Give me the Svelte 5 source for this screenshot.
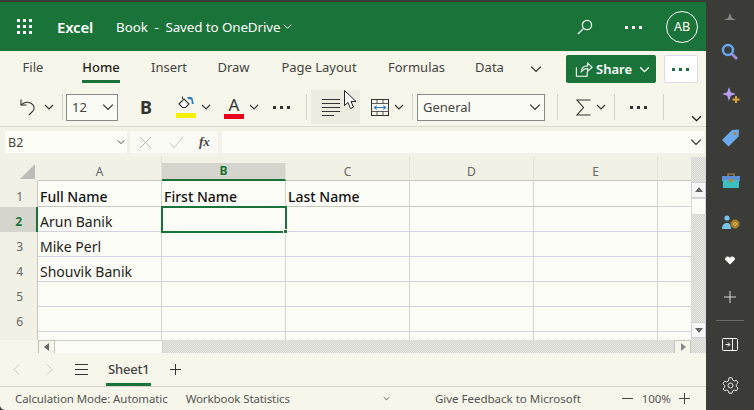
<script>
  const tabs = [
    { label: 'File', width: 66 },
    { label: 'Home', width: 70, active: true },
    { label: 'Insert', width: 66 },
    { label: 'Draw', width: 63 },
    { label: 'Page Layout', width: 108 },
    { label: 'Formulas', width: 87 },
    { label: 'Data', width: 59 },
  ];
  const columns = ['A', 'B', 'C', 'D', 'E'];
  const rows = [
    { n: 1, h: 26, cells: ['Full Name', 'First Name', 'Last Name', '', ''], bold: true },
    { n: 2, h: 25, cells: ['Arun Banik', '', '', '', ''] },
    { n: 3, h: 25, cells: ['Mike Perl', '', '', '', ''] },
    { n: 4, h: 25, cells: ['Shouvik Banik', '', '', '', ''] },
    { n: 5, h: 25, cells: ['', '', '', '', ''] },
    { n: 6, h: 25, cells: ['', '', '', '', ''] },
  ];
</script>

{#snippet chev(size = 10, color = '#333')}
  <svg class="chev" width={size} height={size} viewBox="0 0 10 10"><path d="M1 3l4 4 4-4" fill="none" stroke={color} stroke-width="1.1" /></svg>
{/snippet}

{#snippet dots(color = '#333')}
  <svg width="18" height="4" viewBox="0 0 18 4"><g fill={color}><rect x="0" y="1" width="3" height="3" /><rect x="7" y="1" width="3" height="3" /><rect x="14" y="1" width="3" height="3" /></g></svg>
{/snippet}

<div class="window">
  <main class="excel">
    <header class="titlebar">
      <svg class="waffle" width="16" height="16" viewBox="0 0 16 16" fill="#fff">
        <rect x="0" y="0" width="3" height="3" /><rect x="6" y="0" width="3" height="3" /><rect x="12" y="0" width="3" height="3" />
        <rect x="0" y="6" width="3" height="3" /><rect x="6" y="6" width="3" height="3" /><rect x="12" y="6" width="3" height="3" />
        <rect x="0" y="12" width="3" height="3" /><rect x="6" y="12" width="3" height="3" /><rect x="12" y="12" width="3" height="3" />
      </svg>
      <strong class="app-name">Excel</strong>
      <span class="doc">Book&nbsp; - &nbsp;Saved to OneDrive</span>
      {@render chev(9, '#fff')}
      <span class="grow"></span>
      <svg class="search" width="16" height="16" viewBox="0 0 16 16" fill="none" stroke="#fff" stroke-width="1.2"><circle cx="10" cy="6" r="4.6" /><path d="M6.6 9.4L1 15" /></svg>
      <span class="more">{@render dots('#fff')}</span>
      <span class="avatar">AB</span>
    </header>

    <section class="ribbon">
      <div class="tabs">
        {#each tabs as tab}
          <span class="tab" class:active={tab.active} style="width:{tab.width}px">
            <span class="tab-label">{tab.label}</span>
          </span>
        {/each}
        <span class="tab-more">{@render chev(12)}</span>
        <span class="grow"></span>
        <button class="share">
          <svg width="18" height="18" viewBox="0 0 20 20" fill="none" stroke="#fff" stroke-width="1.2"><path d="M1.500 8v10h12v-5" /><path d="M7 13c0-4 2.500-6.500 7-6.500V3.500l5 4.500-5 4.500V9.500c-3 0-5 1-7 3.500z" /></svg>
          <span>Share</span>
          {@render chev(11, '#fff')}
        </button>
        <button class="overflow">{@render dots('#1f6e43')}</button>
      </div>

      <div class="toolbar">
        <svg class="undo" width="18" height="18" viewBox="0 0 18 18" fill="none" stroke="#333" stroke-width="1.1"><path d="M1 1.500V7h5.500" /><path d="M1 7c2.500-2.500 6-3.500 9.500-2 4 2 4.500 5.500 2.500 8l-4 4" /></svg>
        <span class="undo-chev">{@render chev(10)}</span>
        <i class="sep"></i>
        <span class="combo size"><span>12</span>{@render chev(12)}</span>
        <b class="bold">B</b>
        <span class="swatch fill">
          <svg width="18" height="15" viewBox="0 0 18 15"><path d="M2 9l5-5 5 5-3.500 3.500h-3z" fill="#fff" stroke="#333" stroke-width="1.100" /><path d="M5.500 4V1.500" stroke="#333" stroke-width="1.100" /><path d="M10 2.500c3-1.500 6-.500 6 2.500l.8 4h-2l-.3-3.500c-.2-1.500-2-1.500-3-1z" fill="#2d7cc0" /></svg>
          <i class="bar yellow"></i>
        </span>
        <span class="fill-chev">{@render chev(10)}</span>
        <span class="swatch color">
          <span class="letter">A</span>
          <i class="bar red"></i>
        </span>
        <span class="color-chev">{@render chev(10)}</span>
        <span class="dots-a">{@render dots()}</span>
        <i class="sep sep-a"></i>
        <span class="align">
          <svg width="19" height="18" viewBox="0 0 19 18" stroke="#333" stroke-width="1"><path d="M0 1.500h18M0 5.500h18M0 9.500h18M0 13.500h18M0 17.500h12" fill="none" /></svg>
        </span>
        <svg class="wrap" width="18" height="17" viewBox="0 0 18 17" fill="none" stroke="#333"><rect x=".5" y=".5" width="17" height="16" /><path d="M.5 4.500h17M.5 12.500h17M6 .5v4M12 .5v4M6 12.500v4M12 12.500v4" stroke-width=".8" /><path d="M3 8.500h12M6 6.500l-3 2 3 2M12 6.500l3 2-3 2" stroke="#2d7cc0" /></svg>
        <span class="wrap-chev">{@render chev(10)}</span>
        <i class="sep sep-b"></i>
        <span class="combo format"><span>General</span>{@render chev(12)}</span>
        <i class="sep sep-c"></i>
        <svg class="sigma" width="15" height="17" viewBox="0 0 15 17" fill="none" stroke="#333" stroke-width="1.100"><path d="M14.500 1H1l6.500 7.500L1 16h13.500" /></svg>
        <span class="sum-chev">{@render chev(10)}</span>
        <i class="sep sep-d"></i>
        <span class="dots-b">{@render dots()}</span>
        <i class="sep sep-e"></i>
        <span class="collapse">{@render chev(11, '#111')}</span>
        <svg class="pointer" width="13" height="20" viewBox="0 0 13 20"><path d="M.5.500v15l3.500-3 2.500 6 3-1.300-2.500-5.700h5z" fill="#fff" stroke="#222" /></svg>
      </div>
    </section>

    <div class="formula">
      <span class="name-box"><span>B2</span>{@render chev(8, '#333')}</span>
      <span class="fx-box">
        <svg width="13" height="13" viewBox="0 0 13 13" stroke="#b5b5b5" fill="none"><path d="M1 1l11 11M12 1L1 12" /></svg>
        <svg width="15" height="13" viewBox="0 0 15 13" stroke="#c8c8c0" fill="none"><path d="M1 7l4 5 9-11" /></svg>
        <em>fx</em>
      </span>
      <span class="input">{@render chev(12)}</span>
    </div>

    <div class="sheet">
      <div class="cells">
        <div class="head-row">
          <span class="corner"><i></i></span>
          {#each columns as c}
            <span class="col-head" class:picked={c === 'B'}>{c}</span>
          {/each}
          <span class="col-head edge"></span>
        </div>
        {#each rows as row}
          <div class="row" style="height:{row.h}px">
            <span class="row-head" class:picked={row.n === 2} class:top={row.bold}>{row.n}</span>
            {#each row.cells as cell, i}
              <span class="cell" class:bold-cell={row.bold} class:current={row.n === 2 && i === 1}>
                {cell}
                {#if row.n === 2 && i === 1}<i class="handle"></i>{/if}
              </span>
            {/each}
            <span class="cell edge"></span>
          </div>
        {/each}
        <div class="row tail">
          <span class="row-head"></span>
          {#each columns as c}<span class="cell"></span>{/each}
          <span class="cell edge"></span>
        </div>
        <div class="hscroll">
          <span class="spacer"></span>
          <span class="sbtn"><svg width="6" height="8" viewBox="0 0 6 8"><path d="M5 0v8L0 4z" fill="#666" /></svg></span>
          <span class="hthumb"></span>
          <span class="grow"></span>
          <span class="sbtn end"><svg width="6" height="8" viewBox="0 0 6 8"><path d="M1 0v8l5-4z" fill="#888" /></svg></span>
        </div>
      </div>
      <div class="vscroll">
        <span class="vbtn"><svg width="8" height="6" viewBox="0 0 8 6"><path d="M0 5h8L4 0z" fill="#666" /></svg></span>
        <span class="vthumb"></span>
        <span class="grow"></span>
        <span class="vbtn"><svg width="8" height="6" viewBox="0 0 8 6"><path d="M0 1h8L4 6z" fill="#666" /></svg></span>
      </div>
    </div>

    <div class="sheetbar">
      <svg class="prev" width="7" height="11" viewBox="0 0 7 11" fill="none" stroke="#c9c9c2"><path d="M6 .5l-5 5 5 5" /></svg>
      <svg class="next" width="7" height="11" viewBox="0 0 7 11" fill="none" stroke="#c9c9c2"><path d="M1 .5l5 5-5 5" /></svg>
      <svg class="burger" width="13" height="11" viewBox="0 0 13 11" stroke="#333"><path d="M0 .5h13M0 5.500h13M0 10.500h13" /></svg>
      <span class="sheet-tab">Sheet1</span>
      <svg class="add" width="11" height="11" viewBox="0 0 11 11" stroke="#333"><path d="M5.500 0v11M0 5.500h11" /></svg>
    </div>

    <footer class="status">
      <span class="calc">Calculation Mode: Automatic</span>
      <span class="stats">Workbook Statistics</span>
      <span class="small-chev">{@render chev(7, '#444')}</span>
      <span class="feedback">Give Feedback to Microsoft</span>
      <svg class="minus" width="11" height="11" viewBox="0 0 11 11" stroke="#444"><path d="M0 5.500h11" /></svg>
      <span class="zoom">100%</span>
      <svg width="11" height="11" viewBox="0 0 11 11" stroke="#444"><path d="M5.500 0v11M0 5.500h11" /></svg>
    </footer>
  </main>

  <aside class="sidebar">
    <svg class="s0" width="12" height="7" viewBox="0 0 12 7"><path d="M0 7l4-2 2-5 2 5 4 2z" fill="#85858a" /></svg>
    <svg class="s1" width="18" height="18" viewBox="0 0 18 18" fill="none"><circle cx="7" cy="7" r="5" stroke="#6aa9f2" stroke-width="2.400" /><path d="M11 11l5 5" stroke="#a98ae0" stroke-width="2.600" /></svg>
    <svg class="s2" width="18" height="17" viewBox="0 0 18 17"><path d="M7 0l1.800 5.200L14 7l-5.200 1.800L7 14l-1.800-5.200L0 7l5.200-1.800z" fill="#b99af5" /><path d="M14 9v7M10.500 12.500h7" stroke="#d9a63c" stroke-width="2" /></svg>
    <svg class="s3" width="18" height="18" viewBox="0 0 18 18"><path d="M0 11L10 1l7-.5-.5 7-10 10z" fill="#6aa9ee" /><circle cx="13" cy="4.500" r="1.600" fill="#b5822b" /></svg>
    <svg class="s4" width="18" height="15" viewBox="0 0 18 15"><path d="M6 3V1h6v2" fill="none" stroke="#b08a4a" stroke-width="1.200" /><rect x="0" y="3" width="18" height="5" fill="#5b8fd6" /><rect x="1" y="7" width="16" height="8" fill="#3cbfc0" /><rect x="7" y="6" width="4" height="3" fill="#b5874a" /></svg>
    <svg class="s5" width="18" height="15" viewBox="0 0 18 15"><circle cx="5" cy="3" r="2.600" fill="#76c3ea" /><path d="M0 14c0-4 2-6 5-6s4 2 4 6z" fill="#76c3ea" /><circle cx="13" cy="9" r="4.500" fill="#a9812e" stroke="#6e5a2a" /><circle cx="13" cy="9" r="1.500" fill="none" stroke="#e0b95a" /></svg>
    <svg class="s6" width="10" height="9" viewBox="0 0 10 9"><path d="M5 8.500L0 3.500C0 .5 3.500-.5 5 2c1.500-2.500 5-1.500 5 1.500z" fill="#fff" /></svg>
    <svg class="s7" width="12" height="12" viewBox="0 0 12 12" stroke="#d8d8d8"><path d="M6 0v12M0 6h12" /></svg>
    <i class="side-sep"></i>
    <svg class="s8" width="16" height="13" viewBox="0 0 16 13" fill="none" stroke="#fff"><rect x=".5" y=".5" width="15" height="12" rx="1" /><path d="M10.500.5v12" /><path d="M3.500 6.500h4M6 4.500l2 2-2 2" /></svg>
    <svg class="s9" width="17" height="17" viewBox="0 0 17 17" fill="none" stroke="#e8e8e8"><circle cx="8.500" cy="8.500" r="2.500" /><path d="M7 .8h3l.6 2.300 1.600.9 2.300-.7 1.500 2.600-1.700 1.700v1.800l1.700 1.700-1.500 2.600-2.300-.7-1.600.9-.6 2.300H7l-.6-2.300-1.600-.9-2.300.7L1 12l1.700-1.700V8.500L1 6.800l1.500-2.600 2.300.7 1.600-.9z" /></svg>
  </aside>
</div>

<style>
  :global(body) {
    margin: 0;
    background: #3b3b38;
  }

  .window {
    display: flex;
    width: 754px;
    height: 410px;
    overflow: hidden;
    font-family: "Noto Sans", "Open Sans", sans-serif;
    color: #333;
    background: #3b3b38;
  }

  .excel {
    display: flex;
    flex-direction: column;
    width: 706px;
    height: 408px;
    margin-top: 2px;
    background: #f6f6ea;
    border-bottom-left-radius: 5px;
  }

  .grow {
    flex: 1;
  }

  svg {
    flex: none;
    display: block;
  }

  .titlebar {
    display: flex;
    align-items: center;
    flex: none;
    height: 49px;
    background: #1a7338;
    color: #fff;
  }

  .waffle {
    margin-left: 17px;
  }

  .app-name {
    margin-left: 24px;
    font-size: 15px;
    font-weight: 600;
    letter-spacing: -0.2px;
  }

  .doc {
    margin-left: 23px;
    font-size: 13.400px;
    letter-spacing: -0.1px;
  }

  .titlebar .chev {
    margin-left: 3px;
  }

  .search {
    margin-right: 32px;
  }

  .more {
    margin-right: 23px;
  }

  .avatar {
    display: flex;
    align-items: center;
    justify-content: center;
    box-sizing: border-box;
    width: 32px;
    height: 32px;
    margin-right: 8px;
    border: 1px solid #fff;
    border-radius: 50%;
    font-size: 12.500px;
  }

  .ribbon {
    flex: none;
    height: 76px;
    border-bottom: 1px solid #d9d9d0;
    box-sizing: border-box;
  }

  .tabs {
    display: flex;
    align-items: stretch;
    height: 37px;
    box-sizing: border-box;
    padding: 4px 8px 0 0;
  }

  .tab {
    display: flex;
    justify-content: center;
    flex: none;
    font-size: 13px;
    line-height: 25px;
    color: #444;
  }

  .tab-label {
    display: block;
    height: 25px;
    border-bottom: 3px solid transparent;
  }

  .tab.active {
    color: #222;
    font-weight: 500;
  }

  .tab.active .tab-label {
    border-color: #1a7338;
  }

  .tab-more {
    display: flex;
    align-items: center;
    height: 28px;
    margin-left: 11px;
  }

  .share {
    display: flex;
    align-items: center;
    box-sizing: border-box;
    width: 90px;
    height: 28px;
    padding: 0 0 0 9px;
    border: 0;
    border-radius: 2px;
    background: #1a7338;
    color: #fff;
    font: 600 13px "Noto Sans", sans-serif;
  }

  .share span {
    margin: 0 7px 0 3px;
  }

  .overflow {
    display: flex;
    align-items: center;
    justify-content: center;
    box-sizing: border-box;
    width: 34px;
    height: 28px;
    margin-left: 8px;
    padding: 0;
    background: #fff;
    border: 1px solid #dcdce8;
    border-radius: 2px;
  }

  .toolbar {
    display: flex;
    align-items: center;
    position: relative;
    height: 38px;
  }

  .pointer {
    position: absolute;
    left: 344px;
    top: 2px;
  }

  .undo {
    margin-left: 20px;
  }

  .undo-chev {
    margin-left: 6px;
  }

  .sep {
    flex: none;
    width: 1px;
    height: 26px;
    background: #d4d4cc;
    margin-left: 8px;
  }

  .combo {
    display: flex;
    align-items: center;
    justify-content: space-between;
    flex: none;
    box-sizing: border-box;
    height: 27px;
    padding: 0 3px 0 5px;
    background: #fcfcf6;
    border: 1px solid #8a8a88;
    font-size: 13px;
    color: #444;
  }

  .size {
    width: 52px;
    margin-left: 3px;
  }

  .bold {
    margin-left: 22px;
    font-size: 18px;
    color: #333;
    width: 15px;
  }

  .swatch {
    display: flex;
    flex-direction: column;
    align-items: center;
    flex: none;
    width: 20px;
    height: 24px;
  }

  .fill {
    margin-left: 21px;
  }

  .bar {
    display: block;
    width: 20px;
    height: 5px;
    flex: none;
  }

  .yellow {
    background: #f7f000;
    margin-top: 3px;
  }

  .red {
    background: #e8001c;
    margin-top: 0;
  }

  .fill-chev {
    margin-left: 5px;
  }

  .color {
    margin-left: 13px;
  }

  .letter {
    height: 19px;
    font-size: 17px;
    line-height: 19px;
  }

  .color-chev {
    margin-left: 5px;
  }

  .dots-a {
    margin-left: 14px;
  }

  .sep-a {
    margin-left: 15px;
  }

  .align {
    display: flex;
    align-items: center;
    justify-content: center;
    flex: none;
    box-sizing: border-box;
    width: 49px;
    height: 34px;
    margin-left: 4px;
    padding-right: 8px;
    background: #ecece0;
  }

  .wrap {
    margin-left: 11px;
  }

  .wrap-chev {
    margin-left: 5px;
  }

  .sep-b {
    margin-left: 8px;
  }

  .format {
    width: 128px;
    margin-left: 4px;
  }

  .sep-c {
    margin-left: 12px;
  }

  .sigma {
    margin-left: 18px;
  }

  .sum-chev {
    margin-left: 5px;
  }

  .sep-d {
    margin-left: 8px;
  }

  .dots-b {
    margin-left: 15px;
  }

  .sep-e {
    margin-left: 15px;
  }

  .collapse {
    margin-left: 27px;
    align-self: flex-end;
    padding-bottom: 2px;
  }

  .formula {
    display: flex;
    flex: none;
    height: 30px;
    box-sizing: border-box;
    padding: 4px 2px 4px 5px;
    gap: 3px;
    background: #f2f2e6;
  }

  .name-box {
    display: flex;
    align-items: center;
    justify-content: space-between;
    box-sizing: border-box;
    width: 122px;
    padding: 0 2px 0 3px;
    background: #fdfdf8;
    font-size: 12.500px;
    color: #444;
  }

  .fx-box {
    display: flex;
    align-items: center;
    gap: 17px;
    box-sizing: border-box;
    width: 88px;
    padding-left: 9px;
    background: #fbfbf5;
  }

  .fx-box em {
    font: italic 600 13px "Liberation Serif", serif;
    color: #444;
    margin-left: -2px;
  }

  .input {
    display: flex;
    align-items: center;
    justify-content: flex-end;
    flex: 1;
    margin-left: 1px;
    padding-right: 2px;
    background: #fdfdf8;
  }

  .sheet {
    display: flex;
    flex: none;
    height: 196px;
    background: #f1f1e6;
  }

  .cells {
    display: flex;
    flex-direction: column;
    width: 691px;
    overflow: hidden;
  }

  .head-row,
  .row {
    display: flex;
    flex: none;
  }

  .head-row {
    height: 24px;
    box-sizing: border-box;
  }

  .corner {
    display: flex;
    align-items: flex-end;
    justify-content: flex-end;
    box-sizing: border-box;
    flex: none;
    width: 38px;
    padding: 0 3px 2px 0;
  }

  .corner i {
    width: 0;
    height: 0;
    border-left: 15px solid transparent;
    border-bottom: 15px solid #bdbdb8;
  }

  .col-head {
    flex: none;
    box-sizing: border-box;
    width: 124px;
    padding-top: 6px;
    border-right: 1px solid #e3e3da;
    border-bottom: 1px solid #c8c8c0;
    text-align: center;
    font-size: 12px;
    line-height: 17px;
    color: #666;
  }

  .col-head.edge,
  .cell.edge {
    width: 34px;
    border-right: 0;
  }

  .col-head.picked {
    margin-top: 6px;
    padding-top: 0;
    height: 18px;
    background: #d5d5cd;
    border-bottom: 2px solid #1a7338;
    font-weight: 700;
    color: #1a7338;
    line-height: 16px;
  }

  .row-head {
    flex: none;
    box-sizing: border-box;
    width: 38px;
    padding: 2px 14px 0 0;
    text-align: right;
    border-right: 1px solid #c8c8c0;
    font-size: 12px;
    line-height: 26px;
    color: #666;
  }

  .row-head.top {
    padding-top: 3px;
  }

  .row-head.picked {
    background: #d5d5cd;
    border-right: 2px solid #1a7338;
    font-weight: 700;
    color: #1a7338;
  }

  .cell {
    position: relative;
    flex: none;
    box-sizing: border-box;
    width: 124px;
    padding: 2px 2px 0;
    background: #fdfdf8;
    border-right: 1px solid #d4d4d4;
    border-bottom: 1px solid #d4d2dc;
    font-size: 14px;
    line-height: 26px;
    color: #222;
    white-space: nowrap;
  }

  .bold-cell {
    padding-top: 3px;
    font-weight: 500;
    color: #111;
    border-bottom-color: #c8c8c0;
  }

  .cell.current {
    outline: 2px solid #1a7338;
    outline-offset: -1px;
    z-index: 1;
  }

  .handle {
    position: absolute;
    right: -3px;
    bottom: -3px;
    width: 5px;
    height: 5px;
    background: #1a7338;
    border: 1px solid #fff;
    box-sizing: border-box;
  }

  .tail {
    height: 8px;
  }

  .tail .cell {
    border-bottom: 0;
  }

  .hscroll {
    display: flex;
    flex: none;
    height: 14px;
    background: repeating-conic-gradient(#d6d6d0 0 25%, #e6e6e0 0 50%) 0 0 / 2px 2px;
  }

  .spacer {
    flex: none;
    width: 38px;
    background: #f6f6ea;
  }

  .sbtn {
    display: flex;
    align-items: center;
    justify-content: center;
    flex: none;
    box-sizing: border-box;
    width: 17px;
    background: #f6f6ea;
    border: 1px solid #c4c4bc;
  }

  .hthumb {
    flex: none;
    box-sizing: border-box;
    width: 108px;
    background: #fdfdf8;
    border: 1px solid #d0d0c8;
    border-left: 0;
  }

  .vscroll {
    display: flex;
    flex-direction: column;
    flex: none;
    width: 15px;
    box-sizing: border-box;
    padding: 25px 0 15px;
    background: repeating-conic-gradient(#d6d6d0 0 25%, #e6e6e0 0 50%) 0 0 / 2px 2px;
  }

  .vbtn {
    display: flex;
    align-items: center;
    justify-content: center;
    flex: none;
    box-sizing: border-box;
    height: 16px;
    background: #f6f6f6;
    border: 1px solid #d0d0dc;
  }

  .vthumb {
    flex: none;
    height: 17px;
    background: #fdfdf8;
    border: 1px solid #d8d8d0;
    box-sizing: border-box;
  }

  .sheetbar {
    display: flex;
    align-items: center;
    flex: none;
    height: 34px;
    box-sizing: border-box;
    border-bottom: 1px solid #d4d4cc;
  }

  .prev {
    margin-left: 13px;
  }

  .next {
    margin-left: 26px;
  }

  .burger {
    margin-left: 22px;
  }

  .sheet-tab {
    box-sizing: border-box;
    height: 33px;
    margin-left: 18px;
    padding: 6px 2px 0;
    border-bottom: 3px solid #1a7338;
    font-size: 13px;
    font-weight: 500;
    line-height: 21px;
    letter-spacing: -0.2px;
    color: #444;
  }

  .add {
    margin-left: 19px;
  }

  .status {
    display: flex;
    align-items: center;
    flex: 1;
    padding-left: 15px;
    font-size: 11.500px;
    letter-spacing: -0.1px;
    color: #555;
    white-space: nowrap;
  }

  .stats {
    margin-left: 18px;
  }

  .small-chev {
    margin-left: 93px;
  }

  .feedback {
    margin-left: 45px;
    letter-spacing: 0;
  }

  .minus {
    margin-left: 41px;
  }

  .zoom {
    margin: 0 8px 0 9px;
  }

  .sidebar {
    flex: none;
    width: 48px;
    height: 410px;
    display: flex;
    flex-direction: column;
    align-items: center;
    background: #3b3b38;
  }

  .s0 { margin-top: 13px; margin-left: -1px; }
  .s1 { margin-top: 23px; }
  .s2 { margin-top: 26px; margin-left: 2px; }
  .s3 { margin-top: 25px; margin-left: 2px; }
  .s4 { margin-top: 26px; margin-left: 2px; }
  .s5 { margin-top: 27px; margin-left: 2px; }
  .s6 { margin-top: 26px; }
  .s7 { margin-top: 26px; }
  .s8 { margin-top: 17px; }
  .s9 { margin-top: 26px; }

  .side-sep {
    display: block;
    width: 28px;
    height: 1px;
    margin-top: 17px;
    background: #6a6a6a;
  }
</style>
